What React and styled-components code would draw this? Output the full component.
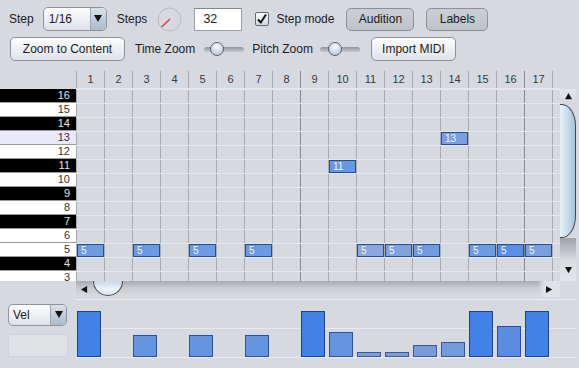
import React from 'react';
import styled, { createGlobalStyle } from 'styled-components';

const GlobalStyle = createGlobalStyle`
  html, body {
    margin: 0;
    padding: 0;
    background: #d6d9df;
  }
  body {
    font-family: "Liberation Sans", Arial, sans-serif;
    font-size: 12px;
    color: #1c1c1c;
  }
`;

const Frame = styled.div`
  width: 579px;
  height: 368px;
  overflow: hidden;
  background: #d6d9df;
  display: flex;
  flex-direction: column;
`;

const Toolbar = styled.div`
  display: flex;
  flex-direction: column;
  gap: 6px;
  padding-top: 7px;
  height: 71px;
  box-sizing: border-box;
  flex-shrink: 0;
`;

const Row = styled.div`
  display: flex;
  align-items: center;
  height: 24px;
`;

const Label = styled.span`
  margin-left: ${p => p.$ml || 0}px;
  white-space: nowrap;
`;

const Combo = styled.div`
  display: flex;
  width: ${p => p.$w}px;
  height: ${p => p.$h}px;
  margin-left: ${p => p.$ml || 0}px;
  box-sizing: border-box;
  border: 1px solid #8b949d;
  border-radius: 5px;
  overflow: hidden;
  background: linear-gradient(#fdfdfe, #eef0f3 50%, #dde1e6);
  flex-shrink: 0;
`;

const ComboText = styled.span`
  flex: 1;
  display: flex;
  align-items: center;
  padding-left: ${p => p.$pl || 5}px;
`;

const ComboArrow = styled.span`
  width: 15px;
  border-left: 1px solid #9aa6b2;
  background: linear-gradient(#d8e1ea, #a9bbcd);
  display: flex;
  align-items: center;
  justify-content: center;
`;

const Dial = styled.svg`
  margin-left: ${p => p.$ml}px;
  flex-shrink: 0;
`;

const Field = styled.div`
  width: 48px;
  height: 23px;
  margin-left: 12px;
  box-sizing: border-box;
  border: 1px solid #9aa1a9;
  border-top-color: #7f8790;
  background: #fff;
  display: flex;
  align-items: center;
  padding-left: 8px;
  font-size: 12.5px;
`;

const Check = styled.span`
  width: 14px;
  height: 14px;
  margin-left: 13px;
  box-sizing: border-box;
  border: 1px solid #5f6a77;
  border-radius: 2px;
  background: linear-gradient(#fbfcfd, #cfd6de);
  display: flex;
  align-items: center;
  justify-content: center;
`;

const Button = styled.button`
  width: ${p => p.$w}px;
  height: ${p => p.$h || 24}px;
  margin-left: ${p => p.$ml || 0}px;
  padding: 0;
  box-sizing: border-box;
  border: 1px solid #8a939c;
  border-radius: 5px;
  font: inherit;
  color: #1c1c1c;
  flex-shrink: 0;
  background: ${p => (p.$on
    ? 'linear-gradient(#cbcfd5, #bec3ca)'
    : 'linear-gradient(#fdfdfe, #eff1f4 45%, #dfe3e8)')};
`;

const Slider = styled.div`
  position: relative;
  width: 40px;
  height: 14px;
  margin-left: ${p => p.$ml}px;
  flex-shrink: 0;
  &::before {
    content: '';
    position: absolute;
    left: 0;
    right: 0;
    top: 5px;
    height: 5px;
    border-radius: 3px;
    background: linear-gradient(#8f969e, #c5cad0);
  }
`;

const Thumb = styled.span`
  position: absolute;
  top: 0;
  left: ${p => p.$at}px;
  width: 14px;
  height: 14px;
  box-sizing: border-box;
  border-radius: 50%;
  border: 1px solid #56626f;
  background: radial-gradient(circle at 50% 30%, #fbfdff, #b8c8d8 80%);
`;

/* piano roll */

const Roll = styled.div`
  display: flex;
  flex-direction: column;
  flex-shrink: 0;
`;

const Line = styled.div`
  display: flex;
  height: ${p => p.$h}px;
  flex-shrink: 0;
`;

const Spacer = styled.div`
  width: ${p => p.$w}px;
  flex-shrink: 0;
`;

const Header = styled.div`
  width: 484px;
  display: flex;
  overflow: hidden;
  box-sizing: border-box;
  border-bottom: 1px solid #e4e6ea;
`;

const HeadCell = styled.div`
  flex: 0 0 28px;
  box-sizing: border-box;
  border-left: 1px solid ${p => (p.$bar ? '#87898e' : '#a8abb0')};
  text-align: center;
  line-height: 17px;
  font-size: 11px;
  color: #3a3a3a;
`;

const Keys = styled.div`
  width: 76px;
  display: flex;
  flex-direction: column;
  overflow: hidden;
  flex-shrink: 0;
`;

const Key = styled.div`
  height: 14px;
  flex-shrink: 0;
  box-sizing: border-box;
  border-bottom: 1px solid #9b9b9b;
  padding-right: 6px;
  text-align: right;
  font-size: 11px;
  line-height: 13px;
  background: ${p => ({ black: '#000', hi: '#e9e9fb', white: '#fff' }[p.$type])};
  color: ${p => (p.$type === 'black' ? '#e4e4e4' : '#333')};
`;

const Grid = styled.div`
  width: 484px;
  display: flex;
  flex-direction: column;
  overflow: hidden;
  flex-shrink: 0;
`;

const GridRow = styled.div`
  display: flex;
  height: 14px;
  flex-shrink: 0;
  box-sizing: border-box;
  border-top: 1px solid #e4e6ea;
`;

const Cell = styled.div`
  flex: 0 0 28px;
  display: flex;
  box-sizing: border-box;
  border-left: 1px solid ${p => (p.$bar ? '#87898e' : '#a8abb0')};
`;

const Note = styled.div`
  flex: 1;
  box-sizing: border-box;
  border: 1px solid #2b4c8b;
  background: ${p => p.$c};
  color: #f2f6ff;
  font-size: 10px;
  line-height: 11px;
  padding-left: 3px;
`;

const VScroll = styled.div`
  width: 16px;
  display: flex;
  flex-direction: column;
  flex-shrink: 0;
`;

const ArrowBtn = styled.div`
  ${p => (p.$v ? `height: ${p.$size}px;` : `width: ${p.$size}px;`)}
  flex-shrink: 0;
  display: flex;
  align-items: center;
  justify-content: center;
  background: ${p => p.$bg || 'linear-gradient(#e3e6ea, #d4d8de)'};
  box-sizing: border-box;
`;

const VThumb = styled.div`
  height: 134px;
  flex-shrink: 0;
  box-sizing: border-box;
  border: 1.5px solid #3e4a58;
  border-left: none;
  border-radius: 0 14px 14px 0 / 0 22px 22px 0;
  background: linear-gradient(to right, #eaf1f8, #c9dbec 50%, #a8c3dc);
`;

const VTrack = styled.div`
  flex: 1;
  background: linear-gradient(#9ea1a6, #c3c6cb 70%, #d6d9df);
`;

const HScroll = styled.div`
  width: 484px;
  display: flex;
  flex-shrink: 0;
  background: linear-gradient(#a9abb0, #c9ccd1 45%, #d8dbe0);
`;

const HThumb = styled.div`
  width: 30px;
  height: 15px;
  margin-left: 1px;
  flex-shrink: 0;
  box-sizing: border-box;
  border: 1.5px solid #3e4a58;
  border-top: none;
  border-radius: 0 0 15px 15px;
  background: linear-gradient(#c7d8e9, #eef4fa 60%, #d7e4f0);
`;

const HTrack = styled.div`
  flex: 1;
`;

/* velocity */

const VelArea = styled.div`
  display: flex;
  margin-top: 2px;
`;

const VelSide = styled.div`
  width: 76px;
  padding-left: 8px;
  box-sizing: border-box;
  display: flex;
  flex-direction: column;
  flex-shrink: 0;
`;

const Disabled = styled.div`
  width: 60px;
  height: 23px;
  margin-top: 8px;
  box-sizing: border-box;
  border: 1px solid #d0d3d8;
  background: #dfe1e5;
`;

const Chart = styled.div`
  width: 500px;
  height: 59px;
  box-sizing: border-box;
  border-top: 1px solid #eaecef;
  border-bottom: 1px solid #eaecef;
  display: flex;
  align-items: flex-end;
  background: linear-gradient(to bottom, transparent 28px, #e8eaed 28px, #e8eaed 29px, transparent 29px);
`;

const Slot = styled.div`
  flex: 0 0 28px;
  height: 100%;
  display: flex;
  align-items: flex-end;
`;

const Bar = styled.div`
  width: 24px;
  margin-left: 1px;
  box-sizing: border-box;
  border: 1px solid ${p => p.$line};
  background: ${p => p.$c};
`;

const Tri = ({ dir, size = 8, color = '#111' }) => {
  const pts = {
    down: '0,0 8,0 4,7',
    up: '0,7 8,7 4,0',
    left: '7,0 7,8 0,4',
    right: '0,0 0,8 7,4',
  }[dir];
  return (
    <svg width={size} height={size} viewBox="0 0 8 8">
      <polygon points={pts} fill={color} />
    </svg>
  );
};

const keys = [
  [16, 'black'], [15, 'white'], [14, 'black'], [13, 'hi'], [12, 'white'],
  [11, 'black'], [10, 'white'], [9, 'black'], [8, 'white'], [7, 'black'],
  [6, 'white'], [5, 'white'], [4, 'black'], [3, 'white'],
];

const notes = {
  5: { 1: '#6c9be2', 3: '#6a9ae3', 5: '#6b9be3', 7: '#6a9ae3', 11: '#89a8db', 12: '#80a2dd', 13: '#6f9ce0', 15: '#6b9be2', 16: '#5a8fe6', 17: '#76a0df' },
  11: { 10: '#6599e6' },
  13: { 14: '#76a0e0' },
};

const FULL = ['#4180e6', '#1f438f'];
const MID = ['#6494df', '#2d5299'];
const LOW = ['#7c9fd8', '#3a5a98'];

const velocity = {
  1: [46, FULL], 3: [22, MID], 5: [22, MID], 7: [22, MID], 9: [46, FULL],
  10: [25, MID], 11: [5, LOW], 12: [5, LOW], 13: [12, ['#779cd9', '#3a5a98']],
  14: [15, ['#729bda', '#365897']], 15: [46, FULL], 16: [31, ['#5a8ce4', '#2a4f96']], 17: [46, FULL],
};

const cols = Array.from({ length: 18 }, (_, i) => i + 1);
const isBar = c => (c - 1) % 8 === 0 && c > 1;

const App = () => (
  <Frame>
    <GlobalStyle />
    <Toolbar>
      <Row>
        <Label $ml={9}>Step</Label>
        <Combo $w={64} $h={24} $ml={9}>
          <ComboText $pl={5}>1/16</ComboText>
          <ComboArrow><Tri dir="down" /></ComboArrow>
        </Combo>
        <Label $ml={10}>Steps</Label>
        <Dial $ml={10} width="25" height="25" viewBox="0 0 25 25">
          <circle cx="12.5" cy="12.5" r="11.5" fill="none" stroke="#b8bbc0" strokeWidth="1" />
          <line x1="4.5" y1="20" x2="13" y2="12" stroke="#e8343a" strokeWidth="1.4" />
        </Dial>
        <Field>32</Field>
        <Check>
          <svg width="12" height="12" viewBox="0 0 12 12">
            <path d="M2 6.5 L4.8 9.5 L10 1.5" fill="none" stroke="#111" strokeWidth="2" />
          </svg>
        </Check>
        <Label $ml={7}>Step mode</Label>
        <Button $on $w={68} $h={23} $ml={12}>Audition</Button>
        <Button $on $w={62} $h={23} $ml={12}>Labels</Button>
      </Row>
      <Row>
        <Button $w={115} $ml={10}>Zoom to Content</Button>
        <Label $ml={10}>Time Zoom</Label>
        <Slider $ml={9}><Thumb $at={6} /></Slider>
        <Label $ml={8}>Pitch Zoom</Label>
        <Slider $ml={7}><Thumb $at={8} /></Slider>
        <Button $w={85} $ml={11}>Import MIDI</Button>
      </Row>
    </Toolbar>

    <Roll>
      <Line $h={18}>
        <Spacer $w={76} />
        <Header>
          {cols.map(c => (
            <HeadCell key={c} $bar={isBar(c)}>{c <= 17 ? c : ''}</HeadCell>
          ))}
        </Header>
      </Line>
      <Line $h={192}>
        <Keys>
          {keys.map(([n, t]) => <Key key={n} $type={t}>{n}</Key>)}
        </Keys>
        <Grid>
          {keys.map(([n]) => (
            <GridRow key={n}>
              {cols.map(c => (
                <Cell key={c} $bar={isBar(c)}>
                  {notes[n] && notes[n][c] && <Note $c={notes[n][c]}>{n}</Note>}
                </Cell>
              ))}
            </GridRow>
          ))}
        </Grid>
        <VScroll>
          <ArrowBtn $v $size={15}><Tri dir="up" size={7} /></ArrowBtn>
          <VThumb />
          <VTrack />
          <ArrowBtn $v $size={22} $bg="linear-gradient(#d9dce1, #e2e5e9)"><Tri dir="down" size={7} /></ArrowBtn>
        </VScroll>
      </Line>
      <Line $h={16}>
        <Spacer $w={76} />
        <HScroll>
          <ArrowBtn $size={16} $bg="transparent"><Tri dir="left" size={7} /></ArrowBtn>
          <HThumb />
          <HTrack />
          <ArrowBtn $size={22} $bg="linear-gradient(to right, transparent, #dfe2e6 30%)"><Tri dir="right" size={7} /></ArrowBtn>
        </HScroll>
      </Line>
    </Roll>

    <VelArea>
      <VelSide>
        <Combo $w={59} $h={22} style={{ marginTop: 5 }}>
          <ComboText $pl={4}>Vel</ComboText>
          <ComboArrow><Tri dir="down" /></ComboArrow>
        </Combo>
        <Disabled />
      </VelSide>
      <Chart>
        {cols.map(c => (
          <Slot key={c}>
            {velocity[c] && (
              <Bar
                $c={velocity[c][1][0]}
                $line={velocity[c][1][1]}
                style={{ height: velocity[c][0] }}
              />
            )}
          </Slot>
        ))}
      </Chart>
    </VelArea>
  </Frame>
);

export default App;
